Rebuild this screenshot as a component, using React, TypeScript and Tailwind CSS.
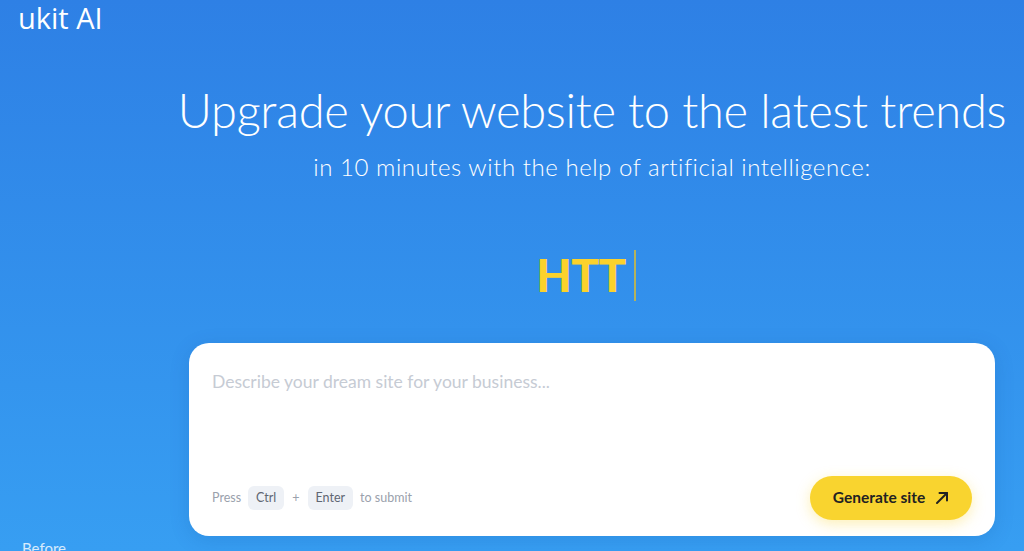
import React from 'react';

const Kbd: React.FC<{ children: React.ReactNode }> = ({ children }) => (
  <span className="rounded-md bg-[#eef1f6] px-[8px] py-[3px] text-[12.5px] text-[#5f6673]">{children}</span>
);

const App: React.FC = () => {
  return (
    <div
      className="relative h-[551px] w-[1024px] overflow-hidden bg-gradient-to-b from-[#2e80e5] to-[#379ef2]"
      style={{ fontFamily: 'Lato, "Open Sans", sans-serif' }}
    >
      <header className="px-[18px] pt-[2px]">
        <span className="text-[29px] font-normal leading-[32px] text-white" style={{ fontFamily: '"Open Sans", sans-serif' }}>
          ukit AI
        </span>
      </header>

      <div className="flex">
        <div className="w-[160px] shrink-0" />
        <main className="flex flex-1 flex-col items-center">
          <h1 className="mt-[45px] text-[47px] font-light leading-[60px] tracking-[-0.3px] text-white">
            Upgrade your website to the latest trends
          </h1>
          <p className="mt-[12px] text-[24px] font-light leading-[30px] tracking-[0.55px] text-white">
            in 10 minutes with the help of artificial intelligence:
          </p>

          <div className="mr-[12px] mt-[67px] flex h-[52px] items-center">
            <span className="text-[46px] font-black leading-none tracking-[-0.5px] text-[#fbd22c]" style={{ fontFamily: 'Lato, sans-serif' }}>
              HTT
            </span>
            <span className="ml-[8px] h-[51px] w-[2px] bg-[#b4b25c]" />
          </div>

          <div className="mt-[42px] flex h-[193px] w-[806px] flex-col justify-between rounded-[20px] bg-white px-[23px] pb-[16px] pt-[26px] shadow-[0_4px_20px_rgba(0,60,140,0.15)]">
            <div className="text-[17.5px] text-[#c6cbd4]">Describe your dream site for your business...</div>
            <div className="flex items-center justify-between">
              <div className="flex items-center gap-[7px] text-[12.5px] text-[#9aa1ac]">
                <span>Press</span>
                <Kbd>Ctrl</Kbd>
                <span className="px-[1px]">+</span>
                <Kbd>Enter</Kbd>
                <span>to submit</span>
              </div>
              <button className="flex h-[44px] w-[162px] items-center justify-center gap-[10px] rounded-full bg-[#f9d42f] text-[15.5px] font-bold text-[#222] shadow-[0_4px_14px_rgba(249,212,47,0.35)]">
                Generate site
                <svg width="14" height="14" viewBox="0 0 14 14" fill="none" stroke="#222" strokeWidth="2" strokeLinecap="round" strokeLinejoin="round">
                  <path d="M2 12 L12 2" />
                  <path d="M4.5 2 H12 V9.5" />
                </svg>
              </button>
            </div>
          </div>
        </main>
      </div>

      <div className="absolute left-[22px] top-[538px] text-[15px] leading-[20px] text-white/80">Before</div>
    </div>
  );
};

export default App;
